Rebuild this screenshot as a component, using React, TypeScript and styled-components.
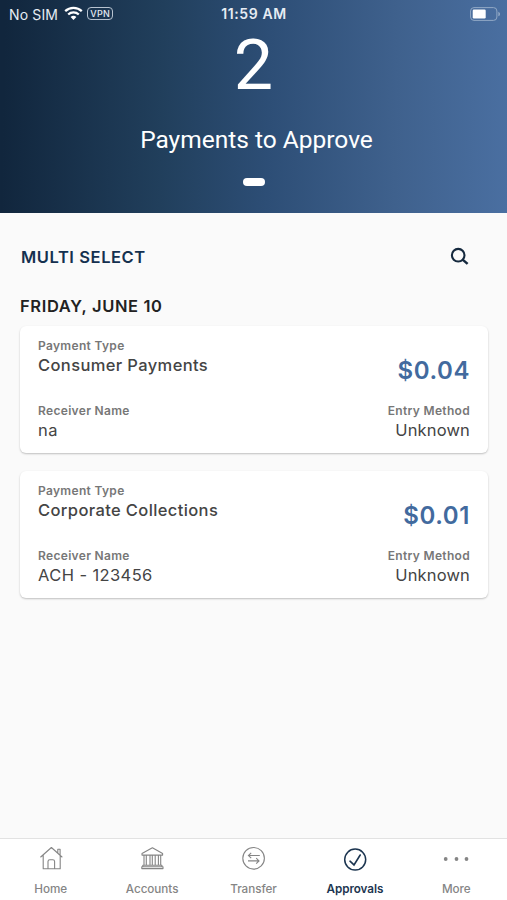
import React from "react";
import styled, { createGlobalStyle } from "styled-components";

const GlobalStyle = createGlobalStyle`
  *, *::before, *::after { box-sizing: border-box; }
  body { margin: 0; background: #fafafa; font-family: Inter, "Liberation Sans", sans-serif; }
  button { border: 0; padding: 0; background: none; font: inherit; color: inherit; }
`;

const Screen = styled.div`
  display: flex;
  flex-direction: column;
  width: 507px;
  height: 900px;
  overflow: hidden;
  background: #fafafa;
`;

const Hero = styled.header`
  display: flex;
  flex-direction: column;
  align-items: center;
  height: 213px;
  flex: none;
  color: #fff;
  background: linear-gradient(91deg, #11263d 1%, #213f5c 32%, #2d4e76 53%, #3f618d 78%, #4a6fa1 100%);
`;

const StatusBar = styled.div`
  display: grid;
  grid-template-columns: 1fr auto 1fr;
  align-items: center;
  width: 100%;
  height: 27px;
  padding: 0 6px 0 9px;
  color: #e6ecf3;
`;

const Carrier = styled.div`
  display: flex;
  align-items: center;
  font-size: 14px;
  letter-spacing: 0.15px;
  line-height: 27px;
  white-space: nowrap;
  svg { margin: -1px 4px 0 6px; }
`;

const Vpn = styled.span`
  display: flex;
  align-items: center;
  justify-content: center;
  width: 26px;
  height: 13px;
  margin-top: -1px;
  border: 1px solid #b7c3d0;
  border-radius: 4px;
  font-size: 9px;
  font-weight: 500;
  letter-spacing: 0.3px;
`;

const Clock = styled.time`
  margin-right: 2px;
  font-size: 14px;
  font-weight: 600;
  letter-spacing: 0.6px;
  line-height: 28px;
`;

const BatterySlot = styled.div`
  display: flex;
  justify-content: flex-end;
  margin-top: -1px;
`;

const Count = styled.div`
  margin-top: -2px;
  font: 400 70px/80px Roboto, sans-serif;
`;

const HeroTitle = styled.h1`
  margin: 20px 0 0 6px;
  font: 400 24.5px/30px Roboto, sans-serif;
`;

const PageMark = styled.span`
  width: 22px;
  height: 8px;
  margin-top: 23px;
  border-radius: 4px;
  background: #fff;
`;

const Content = styled.main`
  flex: 1;
  padding: 28px 19px 0 20px;
`;

const Toolbar = styled.div`
  display: flex;
  align-items: center;
  justify-content: space-between;
  height: 32px;
  padding: 0 19px 0 1px;
  color: #14304f;
`;

const MultiSelect = styled.button`
  font-size: 16.5px;
  font-weight: 600;
  letter-spacing: 0.58px;
`;

const IconButton = styled.button`
  display: flex;
  margin-top: -2px;
`;

const DateHeading = styled.h2`
  margin: 22px 0 9px;
  color: #222;
  font-size: 16.5px;
  font-weight: 600;
  line-height: 22px;
  letter-spacing: 0.62px;
`;

const Card = styled.article`
  display: flex;
  flex-direction: column;
  justify-content: space-between;
  height: 127px;
  margin-bottom: 18px;
  padding: 12px 18px 12px;
  border-radius: 6px;
  background: #fff;
  box-shadow: 0 1px 2px rgba(0, 0, 0, 0.24);
`;

const CardRow = styled.div`
  display: flex;
  justify-content: space-between;
`;

const Field = styled.div<{ $end?: boolean }>`
  text-align: ${(p) => (p.$end ? "right" : "left")};
`;

const Label = styled.div`
  color: #777;
  font-size: 12px;
  font-weight: 600;
  line-height: 16px;
  letter-spacing: 0.32px;
`;

const Value = styled.div<{ $strong?: boolean; $tight?: boolean }>`
  color: #444;
  font-size: 16.5px;
  font-weight: ${(p) => (p.$strong ? 500 : 400)};
  line-height: 22px;
  letter-spacing: ${(p) => (p.$tight ? "0.15px" : p.$strong ? "0.38px" : "0.4px")};
`;

const Amount = styled.div`
  height: 20px;
  margin-top: 18px;
  color: #426a9e;
  font-size: 24px;
  font-weight: 600;
  line-height: 30px;
  letter-spacing: 0.6px;
`;

const TabBar = styled.nav`
  display: grid;
  grid-template-columns: repeat(5, 1fr);
  flex: none;
  height: 62px;
  border-top: 1px solid #e2e2e2;
  background: #fff;
`;

const Tab = styled.button<{ $active?: boolean }>`
  display: flex;
  flex-direction: column;
  align-items: center;
  padding-top: 7px;
  color: ${(p) => (p.$active ? "#1c3550" : "#858585")};
  font-size: 11.7px;
  font-weight: ${(p) => (p.$active ? 600 : 500)};
  line-height: 16px;
  letter-spacing: ${(p) => (p.$active ? "-0.05px" : "-0.05px")};
  svg { margin-bottom: 11px; }
`;

const WifiIcon = () => (
  <svg width="19" height="15" viewBox="0 0 19 15" fill="none" stroke="#fff" strokeWidth="2.3">
    <path d="M1.2 5.2C5.8.8 13.2.8 17.8 5.2M4.2 8.5c3-2.8 7.6-2.8 10.6 0" />
    <path d="M6.6 11c1.7-1.6 4.1-1.6 5.8 0L9.5 14z" fill="#fff" stroke="none" />
  </svg>
);

const BatteryIcon = () => (
  <svg width="31" height="14" viewBox="0 0 31 14">
    <rect x=".6" y=".6" width="26.3" height="12.8" rx="3.4" fill="none" stroke="#91a8c5" />
    <rect x="2.7" y="2.5" width="13" height="9" rx="1.2" fill="#fff" />
    <path d="M28.3 4.7c2.3.8 2.3 3.8 0 4.6z" fill="#91a8c5" />
  </svg>
);

const SearchIcon = () => (
  <svg width="19" height="19" viewBox="0 0 19 19" fill="none" stroke="#15293e">
    <circle cx="8.2" cy="8.2" r="6.3" strokeWidth="2.1" />
    <path d="m12.6 12.6 5 4.3" strokeWidth="2.5" />
  </svg>
);

const HomeIcon = () => (
  <svg width="24" height="24" viewBox="0 0 24 24" fill="none" stroke="currentColor" strokeWidth="1.1" strokeLinejoin="round" strokeLinecap="round">
    <path d="M1.7 11 12.4 1.5 23 11M18.8 7V3.3h2.3v5.8M4.2 9v13.7h17V9M9 22.5v-6.9c0-1.2.7-1.8 1.8-1.8h3c1.1 0 1.8.6 1.8 1.8v6.9" />
  </svg>
);

const BankIcon = () => (
  <svg width="24" height="24" viewBox="0 0 24 24" fill="none" stroke="currentColor" strokeWidth="1.1" strokeLinejoin="round">
    <path d="M2 7.6 12.4 1.7l10.2 5.9v1.5H2zM4 9.1v10.2M6.3 9.1v10.2M10 9.1v10.2M12.3 9.1v10.2M15.2 9.1v10.2M18.4 9.1v10.2M20.7 9.1v10.2M2.8 19.3h19.1v1.5H2.8zM1.8 20.8h21.2v1.8H1.8z" />
  </svg>
);

const TransferIcon = () => (
  <svg width="26" height="24" viewBox="0 0 26 24" fill="none" stroke="currentColor" strokeWidth="1.1">
    <circle cx="13.6" cy="12.3" r="10.8" />
    <path d="M19.8 9.5H8.4m2.8-2.7L8.4 9.5l2.8 2.7M8 14.9h11m-2.8-2.7 2.8 2.7-2.8 2.7" />
  </svg>
);

const ApprovalsIcon = () => (
  <svg width="24" height="25" viewBox="0 0 24 25" fill="none" stroke="currentColor" strokeLinecap="round">
    <circle cx="12.2" cy="13.6" r="10.5" strokeWidth="1.5" />
    <path d="m7 15.2 4 3.7L17.2 9" strokeWidth="1.6" />
  </svg>
);

const MoreIcon = () => (
  <svg width="28" height="24" viewBox="0 0 28 24" fill="currentColor">
    <circle cx="3.7" cy="13" r="1.9" />
    <circle cx="14.5" cy="13" r="1.9" />
    <circle cx="24.5" cy="13" r="1.9" />
  </svg>
);

const TabIcon = styled.span`
  display: flex;
  height: 35px;
`;

const payments = [
  { type: "Consumer Payments", amount: "$0.04", receiver: "na", method: "Unknown" },
  { type: "Corporate Collections", amount: "$0.01", receiver: "ACH - 123456", method: "Unknown" },
];

const tabs = [
  { label: "Home", Icon: HomeIcon },
  { label: "Accounts", Icon: BankIcon },
  { label: "Transfer", Icon: TransferIcon },
  { label: "Approvals", Icon: ApprovalsIcon, active: true },
  { label: "More", Icon: MoreIcon },
];

export default function App() {
  return (
    <>
      <GlobalStyle />
      <Screen>
        <Hero>
          <StatusBar>
            <Carrier>No SIM<WifiIcon /><Vpn>VPN</Vpn></Carrier>
            <Clock>11:59 AM</Clock>
            <BatterySlot><BatteryIcon /></BatterySlot>
          </StatusBar>
          <Count>2</Count>
          <HeroTitle>Payments to Approve</HeroTitle>
          <PageMark />
        </Hero>
        <Content>
          <Toolbar>
            <MultiSelect>MULTI SELECT</MultiSelect>
            <IconButton aria-label="Search"><SearchIcon /></IconButton>
          </Toolbar>
          <DateHeading>FRIDAY, JUNE 10</DateHeading>
          {payments.map((p) => (
            <Card key={p.type}>
              <CardRow>
                <Field><Label>Payment Type</Label><Value $strong>{p.type}</Value></Field>
                <Amount>{p.amount}</Amount>
              </CardRow>
              <CardRow>
                <Field><Label>Receiver Name</Label><Value>{p.receiver}</Value></Field>
                <Field $end><Label>Entry Method</Label><Value $tight>{p.method}</Value></Field>
              </CardRow>
            </Card>
          ))}
        </Content>
        <TabBar>
          {tabs.map(({ label, Icon, active }) => (
            <Tab key={label} $active={active}><TabIcon><Icon /></TabIcon>{label}</Tab>
          ))}
        </TabBar>
      </Screen>
    </>
  );
}
